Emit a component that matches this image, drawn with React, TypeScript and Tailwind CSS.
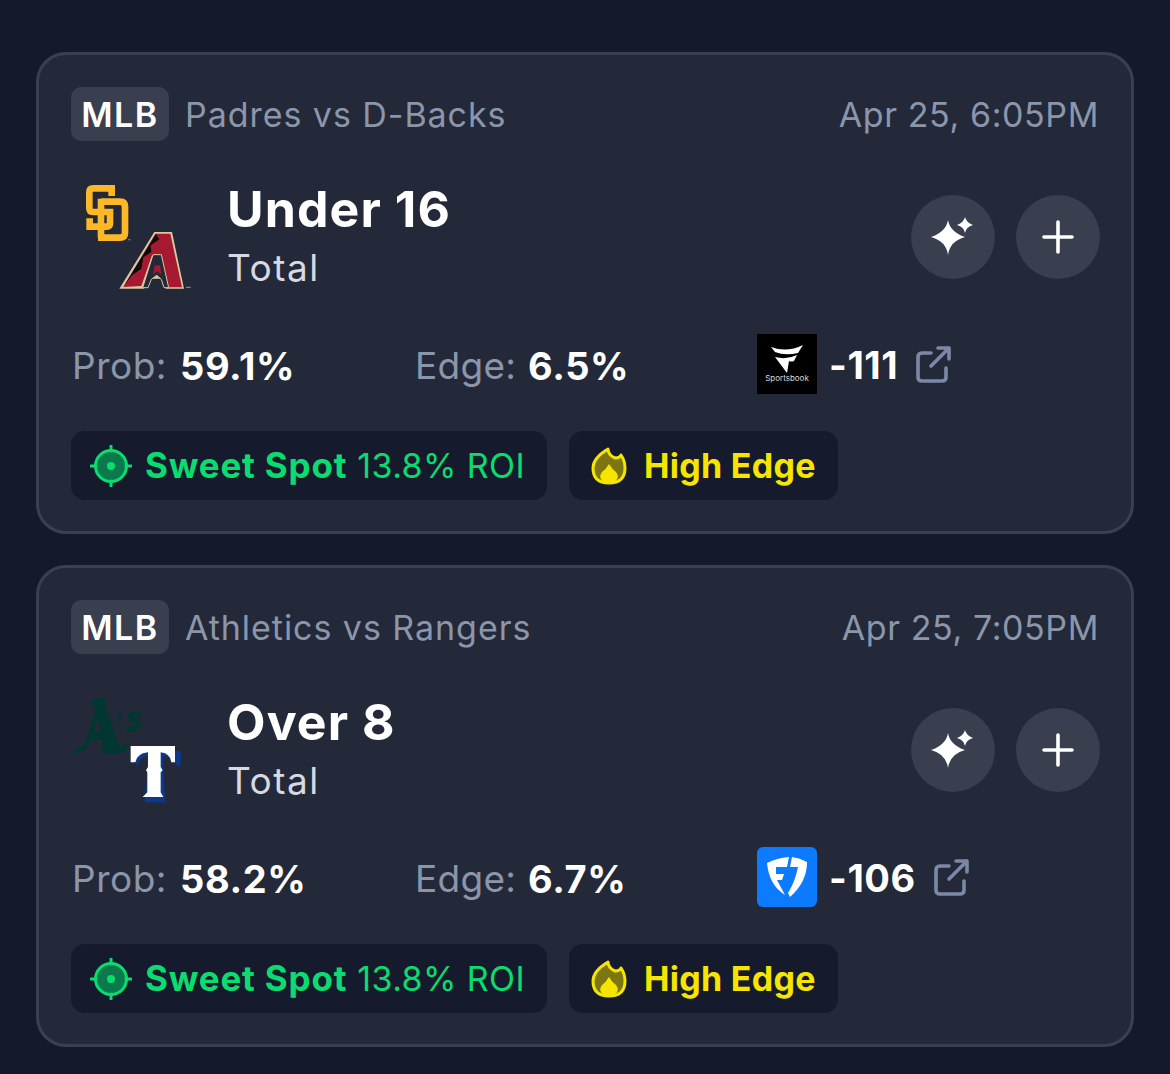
import React from "react";

function PadresDbacks() {
  return (
    <svg viewBox="33 21 360 360" className="w-[120px] h-[120px] overflow-visible">
      <g fill="none" stroke="#fdb827" strokeWidth="20" strokeLinejoin="miter">
        <path d="M155 78 V55 H100 Q88 55 88 67 V115 Q88 126 100 126 H150 V160 Q150 170 140 170 H89 V145" />
        <path d="M123 95 H180 Q195 95 195 110 V188 Q195 203 180 203 H114 M123 203 V86" />
      </g>
      <path d="M283 186 H336 L372 356 H318 L308 326 H268 L252 356 H178 Z" fill="#d8c9a0" />
      <path d="M286 191 H331 L366 352 H322 L302 256 L276 256 L244 348 L190 351 Z" fill="#a71930" />
      <path d="M288 192 L298 208 L272 226 L274 246 L250 262 L244 296 L216 316 L190 350 Z" fill="#0b0b0b" />
      <path d="M279 254 H304 L326 353 H312 L304 328 L290 316 L274 328 L264 353 H248 Z" fill="#232938" stroke="#d8c9a0" strokeWidth="3" />
      <path d="M284 286 L300 286 L304 314 L291 304 L279 314 Z" fill="#a71930" />
      <path d="M378 350 H392 V354 H378 Z M204 208 H212 V211 H204 Z" fill="#7f8490" />
    </svg>
  );
}

function AthleticsRangers() {
  return (
    <svg viewBox="33 15 360 360" className="w-[120px] h-[120px] overflow-visible">
      <path d="M92 58 Q100 38 122 38 Q138 40 138 62 L172 172 Q182 190 200 176 L208 172 Q200 206 172 206 L128 204 Q120 204 126 192 Q132 180 126 166 L96 166 Q80 186 66 200 L38 206 Q56 188 70 178 Q84 160 92 118 Q100 90 108 70 Q100 62 92 58 Z" fill="#003831" />
      <path d="M114 100 L122 140 L100 140 Z" fill="#232938" />
      <path d="M176 84 L186 84 L180 112 L172 112 Z" fill="#003831" />
      <path d="M244 90 Q236 78 220 80 Q200 84 204 100 Q208 110 224 114 Q232 118 226 124 Q214 128 200 118 L198 134 Q214 144 232 136 Q248 126 242 110 Q236 100 222 96 Q216 92 222 90 Q232 90 240 100 Z" fill="#003831" />
      <path d="M224 194 H358 V238 H344 Q340 212 306 208 V256 L312 348 H250 L258 262 V208 Q232 212 226 248 Z" fill="#0b3a8c" transform="translate(4 4)" />
      <path d="M212 183 H345 V232 L334 232 Q332 206 302 202 V246 L308 256 L302 262 V322 L310 336 H248 L262 322 V262 L258 256 L264 246 V202 Q230 206 226 232 L212 232 Z" fill="#ffffff" />
    </svg>
  );
}

function FanaticsLogo() {
  return (
    <div className="w-[60px] h-[60px] bg-black flex flex-col items-center shrink-0">
      <svg viewBox="0 0 60 39" className="w-[60px] h-[39px]">
        <path d="M14 13 Q30 19 46 11 L41 19 Q28 22 18 18 Z M18 23 Q30 26 40 21 L37 27 Q34 28 32 27 L30 39 Z" fill="#fff" />
      </svg>
      <span className="text-[8px] leading-[9px] mt-[1px] text-[#d9d9d9]">Sportsbook</span>
    </div>
  );
}

function FanduelLogo() {
  return (
    <div className="w-[60px] h-[60px] bg-[#0d7bff] rounded-[6px] flex items-center justify-center shrink-0">
      <svg viewBox="0 0 60 60" className="w-[60px] h-[60px]">
        <path d="M10 16 Q20 11 32 10 L30 20 H19 V27 H27 L25 33 H20 L28 48 Q12 38 10 16 Z" fill="#fff" />
        <path d="M35 10 Q43 11 50 15 Q50 35 33 50 L31 46 Q38 35 41 20 H33 Z" fill="#fff" />
      </svg>
    </div>
  );
}

function ExternalIcon() {
  return (
    <svg viewBox="0 0 36 38" className="w-[36px] h-[38px] shrink-0" fill="none" stroke="#7c89a6" strokeWidth="3.6" strokeLinecap="round" strokeLinejoin="round">
      <path d="M15 8 H6 Q2 8 2 12 V32 Q2 36 6 36 H26 Q30 36 30 32 V23" />
      <path d="M15 21 L33 3 M22 3 H33 V14" />
    </svg>
  );
}

function SparkIcon() {
  return (
    <svg viewBox="0 0 44 40" className="w-[44px] h-[40px] -ml-[2px]" fill="#fff">
      <path d="M18 3 Q20 15 35 20 Q20 24 18 38 Q16 24 1 20 Q16 15 18 3 Z" />
      <path d="M35 0 Q36 5 43 8 Q36 10 35 16 Q34 10 27 8 Q34 5 35 0 Z" />
    </svg>
  );
}

function PlusIcon() {
  return (
    <svg viewBox="0 0 34 34" className="w-[34px] h-[34px]" fill="none" stroke="#fff" strokeWidth="3.6" strokeLinecap="round">
      <path d="M17 2 V32 M3 17 H31" />
    </svg>
  );
}

function TargetIcon() {
  return (
    <svg viewBox="0 0 42 42" className="w-[42px] h-[42px] shrink-0">
      <circle cx="21" cy="21" r="15.5" fill="#0a7a4c" stroke="#0bdc70" strokeWidth="3" />
      <circle cx="21" cy="21" r="4" fill="#0bdc70" />
      <path d="M21 1 V6 M21 36 V41 M1 21 H6 M36 21 H41" stroke="#0bdc70" strokeWidth="3" strokeLinecap="round" />
    </svg>
  );
}

function FlameIcon() {
  return (
    <svg viewBox="0 0 36 40" className="w-[36px] h-[40px] shrink-0">
      <path d="M17 3 Q17 9 24 12 Q29 12 30 9 Q34 15 34 22 Q34 37 18 37 Q2 37 2 22 Q2 12 17 3 Z" fill="#7c7512" stroke="#f5e500" strokeWidth="3" strokeLinejoin="round" />
      <path d="M18 18 Q21 23 25 26 Q28 30 26 33 Q24 37 18 37 Q12 37 10 33 Q8 30 11 26 Q15 23 18 18 Z" fill="#f5e500" />
    </svg>
  );
}

function Card({ league, match, time, title, logos, prob, edge, book, odds }: {
  league: string; match: string; time: string; title: string; logos: React.ReactNode; prob: string; edge: string; book: React.ReactNode; odds: string;
}) {
  return (
    <div className="bg-[#232938] border-[3px] border-[#3a4050] rounded-[30px] pl-[32px] pr-[31px] pt-[32px] pb-[31px]">
      <div className="flex items-center h-[54px]">
        <span className="h-[54px] w-[98px] flex items-center justify-center rounded-[10px] bg-[#393f4e] text-white font-semibold text-[34px] tracking-[1.5px]">{league}</span>
        <span className="ml-[16px] text-[34px] tracking-[0.95px] text-[#8b96ab]">{match}</span>
        <span className="ml-auto mr-[1px] text-[34px] tracking-[0.6px] text-[#8b96ab]">{time}</span>
      </div>
      <div className="flex items-center mt-[36px] h-[120px]">
        {logos}
        <div className="ml-[36px] flex flex-col">
          <span className="text-white font-bold text-[50px] tracking-[1.1px] leading-[60px] h-[60px] -mt-[5px]">{title}</span>
          <span className="text-[#d6dae3] text-[37px] tracking-[1.5px] leading-[44px] mt-[7px]">Total</span>
        </div>
        <div className="ml-auto flex gap-[21px]">
          <button className="w-[84px] h-[84px] rounded-full bg-[#393f4e] flex items-center justify-center"><SparkIcon /></button>
          <button className="w-[84px] h-[84px] rounded-full bg-[#393f4e] flex items-center justify-center"><PlusIcon /></button>
        </div>
      </div>
      <div className="grid grid-cols-3 mt-[37px] h-[60px] items-center text-[37px]">
        <div className="pl-[1px] pt-[3px] flex"><span className="text-[#8b96ab] tracking-[0.5px] w-[108px]">Prob:</span> <span className="text-white font-bold text-[38px] leading-[56px] tracking-[0.6px]">{prob}</span></div>
        <div className="pl-[1px] pt-[3px] flex"><span className="text-[#8b96ab] tracking-[0.3px] w-[113px]">Edge:</span> <span className="text-white font-bold text-[38px] leading-[56px] tracking-[0.6px]">{edge}</span></div>
        <div className="flex items-center">
          {book}
          <span className="ml-[12px] text-white font-bold text-[38px] tracking-[0.6px] pt-[3px]">{odds}</span>
          <span className="ml-[18px]"><ExternalIcon /></span>
        </div>
      </div>
      <div className="flex gap-[22px] mt-[37px]">
        <div className="h-[69px] w-[476px] rounded-[14px] bg-[#151b2c] flex items-center pl-[19px] text-[34px] text-[#0bdc70]">
          <TargetIcon />
          <span className="ml-[13px] font-bold text-[35px] tracking-[0.8px]">Sweet Spot</span>
          <span className="ml-[10px] tracking-[0.4px]">13.8% ROI</span>
        </div>
        <div className="h-[69px] w-[269px] rounded-[14px] bg-[#151b2c] flex items-center pl-[22px] text-[34px] text-[#f5e500]">
          <FlameIcon />
          <span className="ml-[17px] font-bold tracking-[0.3px]">High Edge</span>
        </div>
      </div>
    </div>
  );
}

export default function App() {
  return (
    <div className="min-h-[1074px] bg-[#141a2b] px-[36px] pt-[52px] flex flex-col gap-[31px] font-['Inter',sans-serif]">
      <Card league="MLB" match="Padres vs D-Backs" time="Apr 25, 6:05PM" title="Under 16" logos={<PadresDbacks />} prob="59.1%" edge="6.5%" book={<FanaticsLogo />} odds="-111" />
      <Card league="MLB" match="Athletics vs Rangers" time="Apr 25, 7:05PM" title="Over 8" logos={<AthleticsRangers />} prob="58.2%" edge="6.7%" book={<FanduelLogo />} odds="-106" />
    </div>
  );
}
